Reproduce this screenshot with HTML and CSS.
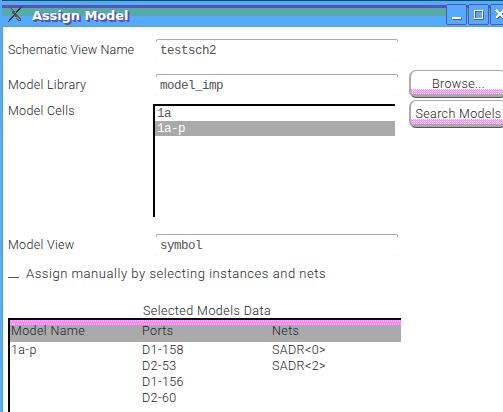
FILE: index.html
```html
<!DOCTYPE html>
<html lang="en">
<head>
<meta charset="utf-8">
<title>Assign Model</title>
<link rel="stylesheet" href="styles.css">
</head>
<body>
<div class="window">
  <header class="titlebar">
    <svg class="logo" width="16" height="18" viewBox="0 0 16 18" shape-rendering="crispEdges"><path d="M1 2h3l4 5 6 7v2h-3L7 10 4 5z" fill="#555"/><path d="M15 1L1 17" stroke="#333" stroke-width="1.2"/><path d="M2 3h2l2 3H4zM10 11l3 4h-2l-2-3z" fill="#888"/></svg>
    <h1 class="title">Assign Model</h1>
    <div class="controls">
      <svg class="control" width="22" height="22" viewBox="0 0 22 22" shape-rendering="crispEdges"><rect x=".5" y=".5" width="20" height="20" rx="2" fill="#55aaff" stroke="#5555aa"/><path d="M7 15h9" stroke="#5555aa" stroke-width="2"/><path d="M6 14h9" stroke="#fff" stroke-width="2"/></svg>
      <svg class="control" width="22" height="22" viewBox="0 0 22 22" shape-rendering="crispEdges"><rect x=".5" y=".5" width="20" height="20" rx="2" fill="#55aaff" stroke="#5555aa"/><path d="M7.5 14V7.500h7M6 15.500h9.500V7" fill="none" stroke="#5555aa"/><rect x="6.500" y="6.500" width="8" height="8" fill="none" stroke="#fff"/></svg>
      <svg class="control" width="22" height="22" viewBox="0 0 22 22" shape-rendering="crispEdges"><rect x=".5" y=".5" width="20" height="20" rx="2" fill="#55aaff" stroke="#5555aa"/><path d="M7 7l8 8M15 7l-8 8" stroke="#5555aa" stroke-width="2"/><path d="M6 6l8 8M14 6l-8 8" stroke="#fff" stroke-width="2"/></svg>
    </div>
  </header>
  <main class="content">
    <div class="form">
      <div class="row row-name"><label class="label">Schematic View Name</label><div class="field">testsch2</div></div>
      <div class="row row-library"><label class="label">Model Library</label><div class="field">model_imp</div></div>
      <div class="row row-cells"><label class="label">Model Cells</label>
        <div class="list"><div class="item">1a</div><div class="item selected">1a-p</div></div>
      </div>
      <div class="row row-view"><label class="label">Model View</label><div class="field">symbol</div></div>
      <div class="check"><span class="box"></span><span class="check-text">Assign manually by selecting instances and nets</span></div>
      <div class="caption">Selected Models Data</div>
      <div class="table">
        <div class="head"><span>Model Name</span><span>Ports</span><span>Nets</span></div>
        <div class="line"><span>1a-p</span><span>D1-158</span><span>SADR&lt;0&gt;</span></div>
        <div class="line"><span></span><span>D2-53</span><span>SADR&lt;2&gt;</span></div>
        <div class="line"><span></span><span>D1-156</span><span></span></div>
        <div class="line"><span></span><span>D2-60</span><span></span></div>
      </div>
    </div>
    <div class="actions">
      <button class="button">Browse...</button>
      <button class="button">Search Models</button>
    </div>
  </main>
</div>
</body>
</html>
```
FILE: styles.css
```css
* { box-sizing: border-box; }
body {
  margin: 0;
  overflow: hidden;
  background: #fff;
  color: #222;
  font: 300 12.5px/16px Roboto, "Liberation Sans", sans-serif;
  letter-spacing: .12px;
  white-space: nowrap;
}
.window {
  width: 503px;
  height: 412px;
  overflow: hidden;
  border-left: 2px solid #55aaff;
}
.titlebar {
  display: flex;
  height: 27px;
  margin-left: -1px;
  background: linear-gradient(#055 0 1px, #55aaff 1px 5px, #5555aa 5px 8px, #5aa 8px 16px, #55aaff 16px 26px, #5aa 26px);
}
.logo { flex: none; margin: 5px 0 0 6px; }
.title {
  width: 424px;
  flex: none;
  margin: 6px 0 0 9px;
  color: #fff;
  font: bold 13px/19px "DejaVu Sans", sans-serif;
  letter-spacing: -.1px;
  text-shadow: 1px 1px #5555aa, 2px 2px #5555aa;
}
.controls { display: flex; flex: none; margin: 4px 0 0 -10px; }
.control { flex: none; }
.content {
  display: flex;
  height: 385px;
  border-left: 1px solid #5aa;
}
.form { width: 393px; margin-left: 5px; flex: none; }
.row { display: flex; }
.label { width: 148px; flex: none; }
.row-name { height: 35px; padding-top: 12px; }
.row-library { height: 42px; padding-top: 12px; }
.row-library .label, .row-cells .label, .row-view .label { letter-spacing: .3px; }
.row-name .label { padding-top: 3px; }
.row-library .label { padding-top: 3px; }
.field {
  width: 242px;
  height: 22px;
  padding: 3px 0 0 4px;
  border-top: 1px solid #aaa;
  border-radius: 2px;
  color: #555;
  font: 12.5px/16px "Liberation Mono", monospace;
  letter-spacing: -.5px;
  background:
    linear-gradient(#aaa, #aaa) 0 0 / 1px 2px no-repeat,
    linear-gradient(#aaa, #aaa) 100% 0 / 1px 2px no-repeat,
    linear-gradient(#aaa, #aaa) 0 20px / 1px 1px no-repeat,
    linear-gradient(#aaa, #aaa) 100% 20px / 1px 1px no-repeat;
}
.row-cells { height: 113px; }
.row-cells .label { margin-top: -1px; }
.list {
  width: 242px;
  height: 113px;
  margin-left: -3px;
  border-top: 2px solid #000;
  border-left: 2px solid #000;
  color: #555;
  font: 12.5px/16px "Liberation Mono", monospace;
  letter-spacing: -.5px;
}
.item { height: 15px; padding-left: 2px; }
.selected { background: #aaa; color: #fff; }
.row-view { height: 49px; padding-top: 17px; }
.row-view .label { padding-top: 3px; }
.check { display: flex; }
.box { width: 11px; height: 12px; border-bottom: 1px solid #555; margin-right: 7px; }
.check-text { font-size: 13px; letter-spacing: .54px; }
.caption { margin: 21px 0 0 135px; height: 15px; letter-spacing: .45px; }
.table {
  height: 100px;
  border-top: 2px solid #000;
  border-left: 2px solid #000;
  letter-spacing: .4px;
}
.head, .line { display: grid; grid-template-columns: 131px 130px 1fr; padding-left: 1px; }
.head {
  height: 22px;
  padding-top: 3px;
  background: conic-gradient(#faf 25%, #ff80ff 0 50%, #faf 0 75%, #ff80ff 0) 0 0 / 2px 5px repeat-x, #aaa;
}
.line { height: 16px; }
.actions { margin: 43px 0 0 8px; flex: none; display: flex; flex-direction: column; gap: 2px; }
.button {
  width: 98px;
  height: 28px;
  padding: 0;
  border: 1px solid #aaa;
  border-left-width: 2px;
  border-bottom: 1px solid #555;
  border-radius: 7px;
  background:
    linear-gradient(#fff 0 18px, transparent 18px 23px, #aaa 23px),
    conic-gradient(#fff 25%, #f8f 0 50%, #faf 0 75%, #f8f 0) 0 0 / 2px 2px;
  color: #222;
  font: inherit;
  letter-spacing: .35px;
}
```
